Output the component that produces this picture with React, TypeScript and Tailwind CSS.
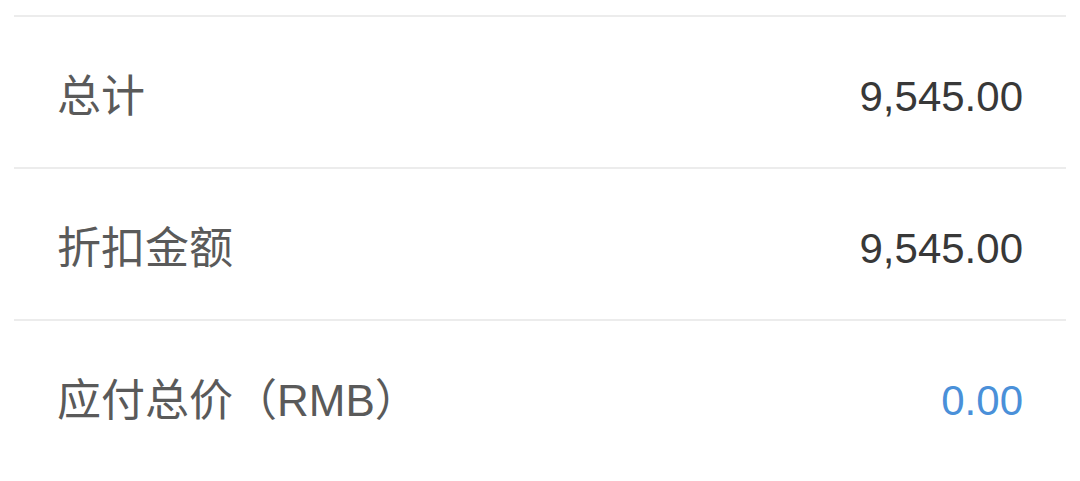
import React from 'react';

interface Row {
  label: string;
  value: string;
  highlight?: boolean;
}

const rows: Row[] = [
  { label: '总计', value: '9,545.00' },
  { label: '折扣金额', value: '9,545.00' },
  { label: '应付总价（RMB）', value: '0.00', highlight: true },
];

const App = () => {
  return (
    <div
      className="w-[1080px] h-[481px] bg-white px-[14px] pt-[15px] overflow-hidden"
      style={{ fontFamily: '"Liberation Sans", "Noto Sans CJK SC", sans-serif' }}
    >
      {rows.map((row) => (
        <div
          key={row.label}
          className="h-[152px] border-t-2 border-[#ececec] flex items-center justify-between px-[43px] pt-[9px]"
        >
          <span className="text-[44px] text-[#5a5a5a] leading-none">{row.label}</span>
          <span
            className={
              row.highlight
                ? 'text-[42px] text-[#4a90d9] leading-none'
                : 'text-[42px] text-[#383838] leading-none'
            }
          >
            {row.value}
          </span>
        </div>
      ))}
    </div>
  );
};

export default App;
